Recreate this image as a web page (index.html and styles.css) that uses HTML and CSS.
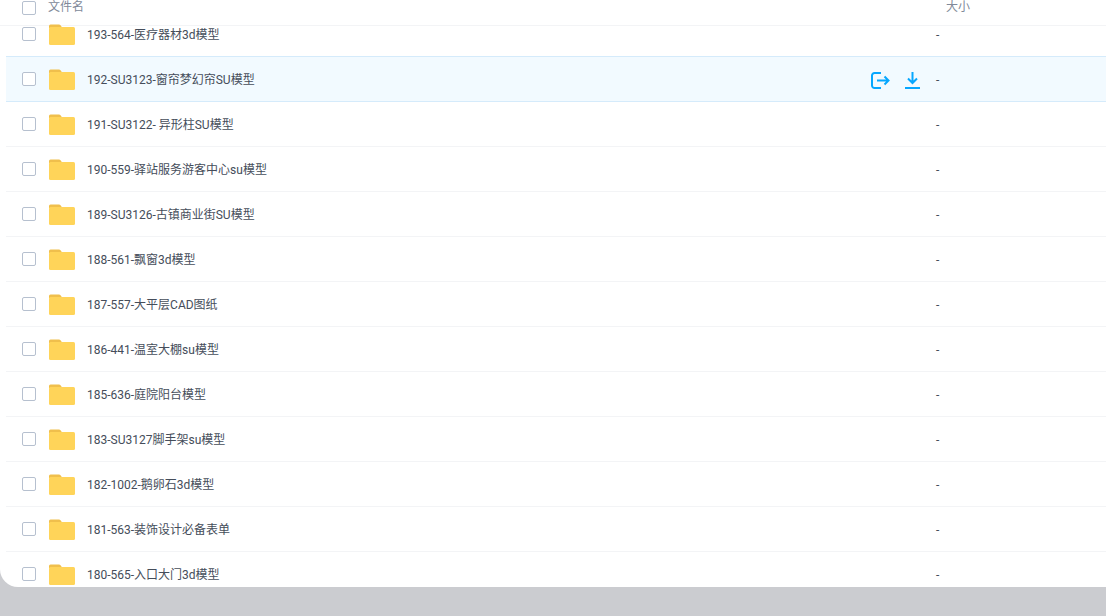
FILE: index.html
```html
<!DOCTYPE html>
<html lang="zh-CN">
<head>
<meta charset="utf-8">
<title>文件列表</title>
<link rel="stylesheet" href="styles.css">
</head>
<body>
<svg class="defs" width="0" height="0" aria-hidden="true">
  <symbol id="folder" viewBox="0 0 26 21">
    <path d="M0 4V2A1.500 1.500 0 0 1 1.500.5h8.500a2 2 0 0 1 1.500.7L13.500 4z" fill="#f0bf4c"/>
    <rect x="0" y="3" width="26" height="18" rx="1.500" fill="#ffd459"/>
  </symbol>
</svg>
<main class="panel">
  <header class="head">
    <span class="check"></span>
    <span class="head-name">文件名</span>
    <span class="head-size">大小</span>
  </header>
  <div class="list">
    <div class="row"><span class="check"></span><svg class="folder"><use href="#folder"/></svg><span class="name">193-564-医疗器材3d模型</span><span class="size">-</span></div>
    <div class="row row-active"><span class="check"></span><svg class="folder"><use href="#folder"/></svg><span class="name">192-SU3123-窗帘梦幻帘SU模型</span>
      <span class="actions">
        <svg class="icon-share" viewBox="0 0 19 17" fill="none" stroke="#06a7ff" stroke-width="2"><path d="M10 1H3.500A2.500 2.500 0 0 0 1 3.500v10A2.500 2.500 0 0 0 3.500 16H10"/><path d="M6 8.500h11.500M13.500 4.500l4 4-4 4"/></svg>
        <svg class="icon-down" viewBox="0 0 15 17" fill="none" stroke="#06a7ff" stroke-width="2"><path d="M7.500 0V11M3 6.500 7.500 11 12 6.500"/><path d="M0 16h15"/></svg>
      </span>
      <span class="size">-</span></div>
    <div class="row"><span class="check"></span><svg class="folder"><use href="#folder"/></svg><span class="name">191-SU3122- 异形柱SU模型</span><span class="size">-</span></div>
    <div class="row"><span class="check"></span><svg class="folder"><use href="#folder"/></svg><span class="name">190-559-驿站服务游客中心su模型</span><span class="size">-</span></div>
    <div class="row"><span class="check"></span><svg class="folder"><use href="#folder"/></svg><span class="name">189-SU3126-古镇商业街SU模型</span><span class="size">-</span></div>
    <div class="row"><span class="check"></span><svg class="folder"><use href="#folder"/></svg><span class="name">188-561-飘窗3d模型</span><span class="size">-</span></div>
    <div class="row"><span class="check"></span><svg class="folder"><use href="#folder"/></svg><span class="name">187-557-大平层CAD图纸</span><span class="size">-</span></div>
    <div class="row"><span class="check"></span><svg class="folder"><use href="#folder"/></svg><span class="name">186-441-温室大棚su模型</span><span class="size">-</span></div>
    <div class="row"><span class="check"></span><svg class="folder"><use href="#folder"/></svg><span class="name">185-636-庭院阳台模型</span><span class="size">-</span></div>
    <div class="row"><span class="check"></span><svg class="folder"><use href="#folder"/></svg><span class="name">183-SU3127脚手架su模型</span><span class="size">-</span></div>
    <div class="row"><span class="check"></span><svg class="folder"><use href="#folder"/></svg><span class="name">182-1002-鹅卵石3d模型</span><span class="size">-</span></div>
    <div class="row"><span class="check"></span><svg class="folder"><use href="#folder"/></svg><span class="name">181-563-装饰设计必备表单</span><span class="size">-</span></div>
    <div class="row"><span class="check"></span><svg class="folder"><use href="#folder"/></svg><span class="name">180-565-入口大门3d模型</span><span class="size">-</span></div>
  </div>
</main>
</body>
</html>
```

FILE: styles.css
```css
html, body {
  margin: 0;
  height: 100%;
  background: #cbccd0;
  overflow: hidden;
  font-family: Roboto, "Noto Sans CJK SC", sans-serif;
  font-size: 12px;
}
.defs { display: block; height: 0; }
.panel {
  height: 587px;
  background: #fff;
  border-bottom-left-radius: 18px;
  overflow: hidden;
}
.head {
  height: 25px;
  border-bottom: 1px solid #f3f4f6;
  display: flex;
  align-items: flex-start;
  padding-left: 22px;
  color: #818999;
  line-height: 14px;
}
.head .check { margin-top: 1px; }
.head-name { margin-left: 12px; }
.head-size { margin-left: 862px; }
.list {
  margin: -14px 0 0 6px;
}
.row {
  height: 44px;
  border-bottom: 1px solid #f3f4f6;
  display: flex;
  align-items: center;
  padding-left: 16px;
  color: #454d5a;
}
.row-active {
  background: #f2faff;
  border-top: 1px solid #d5ebfb;
  border-bottom-color: #d5ebfb;
  margin-top: -1px;
}
.check {
  width: 12px;
  height: 12px;
  flex: none;
  border: 1px solid #b6c0cf;
  border-radius: 2px;
  background: #fff;
  margin-bottom: 1px;
}
.folder {
  width: 26px;
  height: 21px;
  flex: none;
  margin-left: 13px;
}
.name {
  margin-left: 12px;
  margin-bottom: 2px;
  flex: 1 1 0;
  min-width: 0;
  white-space: pre;
}
.size {
  flex: none;
  width: 170px;
  margin-top: 1px;
}
.actions {
  display: flex;
  align-items: center;
  gap: 15px;
  margin-top: 2px;
  margin-right: 16px;
}
.icon-share { width: 19px; height: 17px; flex: none; }
.icon-down { width: 15px; height: 17px; flex: none; }
```
